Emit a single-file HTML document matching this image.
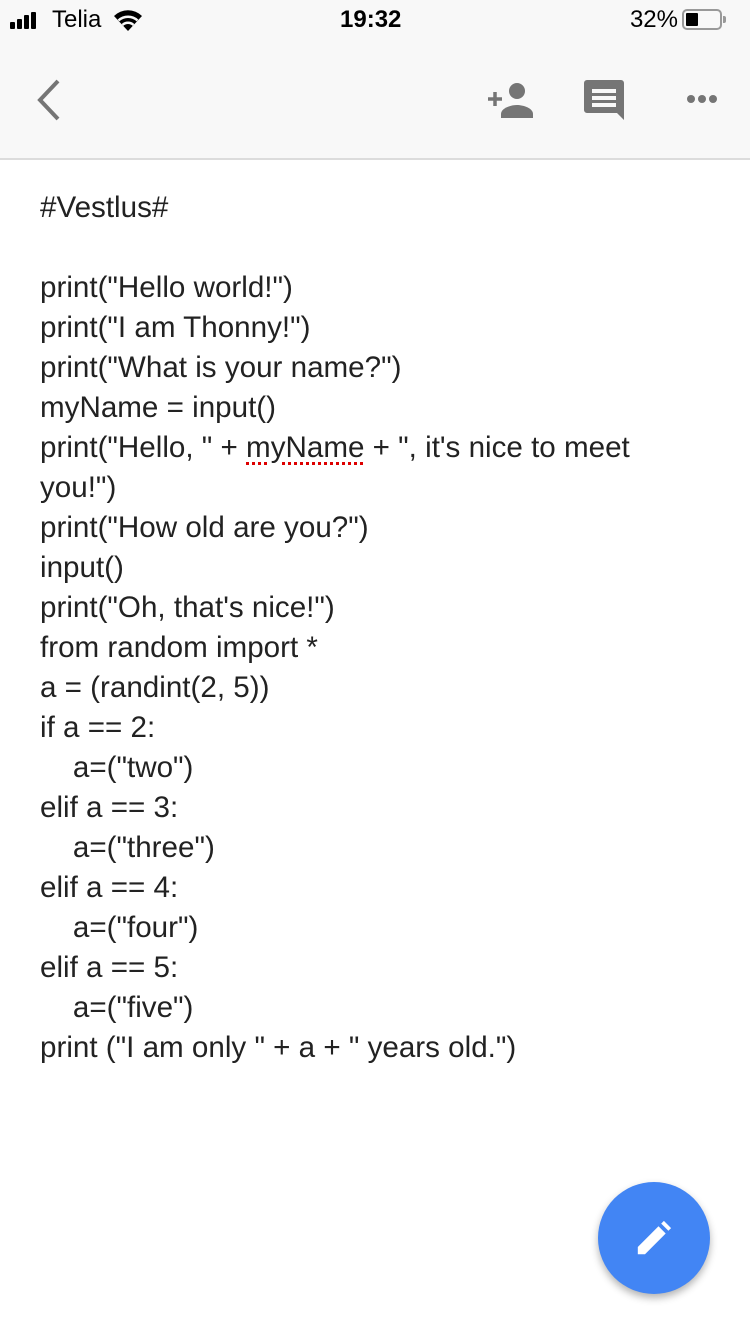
<!DOCTYPE html>
<html><head><meta charset="utf-8"><style>
body{margin:0;width:750px;height:1334px;background:#fff;font-family:"Liberation Sans",Arial,sans-serif;position:relative;overflow:hidden}
.top{position:absolute;left:0;top:0;width:750px;height:158px;background:#f8f8f8;border-bottom:2px solid #dcdcdc}
.sb{position:absolute;top:6px;font-size:24px;color:#000}
.doc{position:absolute;left:40px;top:188px;font-size:29.6px;line-height:40px;color:#222;white-space:pre}
.fab{position:absolute;left:598px;top:1182px;width:112px;height:112px;border-radius:50%;background:#4285f4;box-shadow:0 4px 8px rgba(0,0,0,.3)}
.sp{text-decoration:underline dotted #d00;text-underline-offset:5px}
</style></head><body>
<div class="top">
  <svg style="position:absolute;left:10px;top:12px" width="36" height="18"><rect x="0" y="10" width="5" height="7" rx="1"/><rect x="7" y="7" width="5" height="10" rx="1"/><rect x="14" y="3" width="5" height="14" rx="1"/><rect x="21" y="0" width="5" height="17" rx="1"/></svg>
  <div class="sb" style="left:52px">Telia</div>
  <svg style="position:absolute;left:114px;top:10px" width="28" height="22" viewBox="0 0 28 22"><path d="M14 21 L0 6 A20 20 0 0 1 28 6 Z" fill="#000"/><path d="M4.5 10.5 A14 14 0 0 1 23.5 10.5" stroke="#f8f8f8" stroke-width="2.5" fill="none"/><path d="M8.5 15 A8 8 0 0 1 19.5 15" stroke="#f8f8f8" stroke-width="2.5" fill="none"/></svg>
  <div class="sb" style="left:340px;font-weight:bold">19:32</div>
  <div class="sb" style="right:72px">32%</div>
  <div style="position:absolute;left:682px;top:9px;width:40px;height:21px;border:2px solid #999;border-radius:5px;box-sizing:border-box"><div style="position:absolute;left:2px;top:2px;width:12px;height:13px;background:#000;border-radius:1px"></div></div>
  <div style="position:absolute;left:723px;top:16px;width:3px;height:7px;background:#999;border-radius:0 2px 2px 0"></div>
  <svg style="position:absolute;left:32px;top:78px" width="30" height="44"><path d="M26 3 L8 22 L26 41" stroke="#757575" stroke-width="4" fill="none"/></svg>
  <svg style="position:absolute;left:486px;top:82px" width="48" height="36" viewBox="0 0 48 36"><path d="M2 17h14M9 10v14" stroke="#757575" stroke-width="3.5"/><circle cx="31" cy="9" r="8" fill="#757575"/><path d="M15 36v-4c0-6 10-9 16-9s16 3 16 9v4z" fill="#757575"/></svg>
  <svg style="position:absolute;left:584px;top:80px" width="44" height="40" viewBox="0 0 44 40"><path d="M3 0h34a3 3 0 0 1 3 3v37l-7-7H3a3 3 0 0 1-3-3V3a3 3 0 0 1 3-3z" fill="#757575"/><rect x="8" y="9" width="24" height="4" fill="#f8f8f8"/><rect x="8" y="16" width="24" height="4" fill="#f8f8f8"/><rect x="8" y="23" width="24" height="4" fill="#f8f8f8"/></svg>
  <svg style="position:absolute;left:684px;top:93px" width="36" height="12"><circle cx="7" cy="6" r="4" fill="#757575"/><circle cx="18" cy="6" r="4" fill="#757575"/><circle cx="29" cy="6" r="4" fill="#757575"/></svg>
</div>
<div class="doc">#Vestlus#

print("Hello world!")
print("I am Thonny!")
print("What is your name?")
myName = input()
print("Hello, " + <span class="sp">myName</span> + ", it's nice to meet
you!")
print("How old are you?")
input()
print("Oh, that's nice!")
from random import *
a = (randint(2, 5))
if a == 2:
    a=("two")
elif a == 3:
    a=("three")
elif a == 4:
    a=("four")
elif a == 5:
    a=("five")
print ("I am only " + a + " years old.")</div>
<div class="fab"><svg style="position:absolute;left:38px;top:38px" width="36" height="36" viewBox="0 0 40 40"><path d="M2 38V30L25 7l8 8L10 38z" fill="#fff"/><path d="M28 4l3-3 8 8-3 3z" fill="#fff"/></svg></div>
</body></html>
